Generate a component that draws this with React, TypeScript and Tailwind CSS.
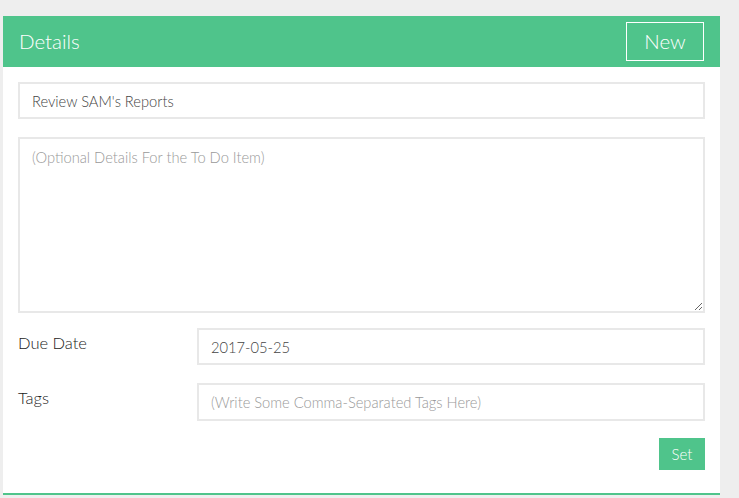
import { useState } from 'react';

export default function App() {
  const [title, setTitle] = useState("Review SAM's Reports");
  const [details, setDetails] = useState('');
  const [due, setDue] = useState('2017-05-25');
  const [tags, setTags] = useState('');

  const field =
    'w-full border-2 border-[#e8e8e8] bg-white px-[12px] text-[14.7px] font-light text-[#444] placeholder:text-[#999] outline-none';

  return (
    <div className="min-h-screen bg-[#eeeeee] pt-[16px] pl-[3px] pr-[19px] font-['Lato','Open_Sans',sans-serif]">
      <div className="bg-white border-b-2 border-[#4fc48b]">
        {/* Header */}
        <div className="h-[51px] bg-[#4fc48b] flex items-center justify-between pl-[16px] pr-[16px]">
          <h1 className="text-[20.5px] font-light text-white">Details</h1>
          <button className="w-[78px] h-[39px] border border-white text-white text-[20.5px] font-light">New</button>
        </div>

        {/* Form */}
        <div className="px-[15px] pt-[15px] pb-[23px]">
          <input
            className={`${field} h-[37px]`}
            value={title}
            onChange={(e) => setTitle(e.target.value)}
          />
          <textarea
            className={`${field} block mt-[18px] h-[176px] py-[7px]`}
            placeholder="(Optional Details For the To Do Item)"
            value={details}
            onChange={(e) => setDetails(e.target.value)}
          />

          <div className="flex mt-[15px]">
            <label className="w-[179px] shrink-0 pt-[3px] text-[16.5px] font-light text-[#222]">Due Date</label>
            <input
              className={`${field} h-[37px]`}
              value={due}
              onChange={(e) => setDue(e.target.value)}
            />
          </div>

          <div className="flex mt-[18px]">
            <label className="w-[179px] shrink-0 pt-[3px] text-[16.5px] font-light text-[#222]">Tags</label>
            <input
              className={`${field} h-[38px]`}
              placeholder="(Write Some Comma-Separated Tags Here)"
              value={tags}
              onChange={(e) => setTags(e.target.value)}
            />
          </div>

          <div className="flex justify-end mt-[17px]">
            <button className="w-[46px] h-[32px] bg-[#4fc48b] text-white text-[15px] font-light">Set</button>
          </div>
        </div>
      </div>
    </div>
  );
}
